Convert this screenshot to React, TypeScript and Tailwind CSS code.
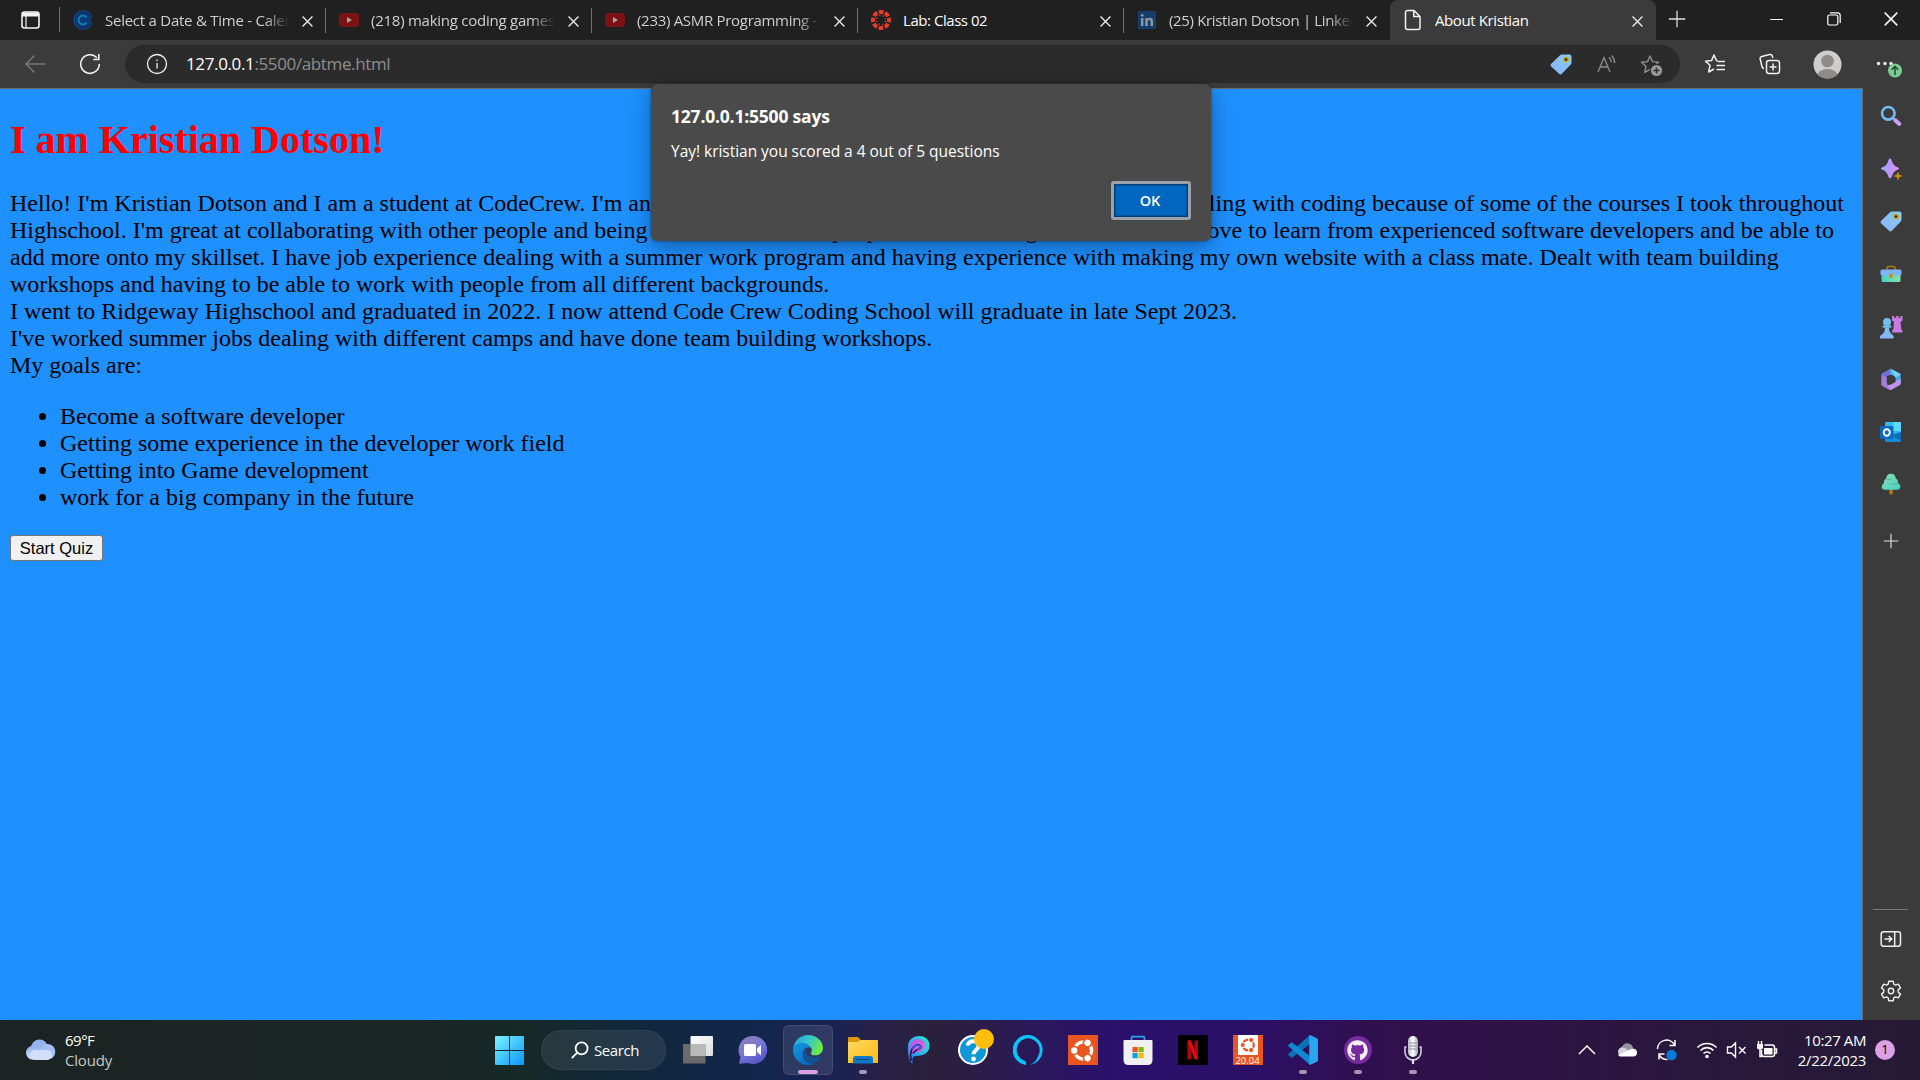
import type { ReactNode } from "react";
import { FaGithub } from "react-icons/fa";

const UI = "font-['Open_Sans','Noto_Sans',sans-serif]";

/* ---------- favicons ---------- */
const Calendly = () => (
  <svg width="20" height="20" viewBox="0 0 20 20" fill="none">
    <circle cx="10" cy="10" r="7.8" fill="#0d3a7c" />
    <path d="M17.5 4.2A9.2 9.2 0 1 0 17.5 15.8" stroke="#0a4a9c" strokeWidth="1.3" />
    <path d="M13.6 7.4A4.4 4.4 0 1 0 13.6 12.6" stroke="#1089a8" strokeWidth="1.7" />
    <path d="M17.5 4.5l1 4M17.5 15.5l1-4" stroke="#0a4a9c" strokeWidth="1.3" />
  </svg>
);
const YouTube = () => (
  <svg width="20" height="20" viewBox="0 0 20 20">
    <rect y="3" width="20" height="14" rx="3.5" fill="#7c1214" />
    <path d="M8 7l5 3-5 3z" fill="#aaa09e" />
  </svg>
);
const Canvas = () => (
  <svg width="20" height="20" viewBox="0 0 20 20" fill="none">
    <circle cx="10" cy="10" r="8" stroke="#e73c2d" strokeWidth="4" strokeDasharray="4.6 1.683" strokeDashoffset="2.3" />
    <circle cx="10" cy="10" r="4.6" stroke="#e73c2d" strokeWidth="1.4" strokeDasharray="1.2 2.413" strokeDashoffset="-1.2" />
  </svg>
);
const LinkedIn = () => (
  <svg width="18" height="18" viewBox="0 0 18 18">
    <rect width="18" height="18" rx="1" fill="#153e6b" />
    <g fill="#8d979f">
      <rect x="3" y="7" width="2.4" height="8" />
      <circle cx="4.2" cy="4.3" r="1.4" />
      <path d="M7.2 7h2.3v1.1C10.1 7.200 11 6.800 12 6.800c2.300 0 3 1.500 3 3.500V15h-2.400v-4.200c0-1.100-.3-1.900-1.300-1.900s-1.600.7-1.600 1.900V15H7.200z" />
    </g>
  </svg>
);
const Page = () => (
  <svg width="18" height="22" viewBox="0 0 18 22" fill="none" stroke="#f2f2f2" strokeWidth="1.5">
    <path d="M3.500 1.500H10l6 6V18.500a2 2 0 0 1-2 2H3.500a2 2 0 0 1-2-2v-15a2 2 0 0 1 2-2z" />
    <path d="M9.800 1.800V7.500h6" />
  </svg>
);
const Close = ({ s = 11 }: { s?: number }) => (
  <svg width={s} height={s} viewBox="0 0 12 12" stroke="#f0f0f0" strokeWidth="1.4">
    <path d="M.6.6l10.800 10.800M11.400.6L.6 11.400" />
  </svg>
);

/* ---------- tabs ---------- */
type TabProps = { icon: ReactNode; title: string; active?: boolean; bright?: boolean; sep?: boolean; fit?: string };
function Tab({ icon, title, active, bright, sep = true, fit = "tracking-[-0.3px]" }: TabProps) {
  return (
    <div className={`relative flex h-10 w-[266px] shrink-0 items-center pl-[13px] ${active ? "rounded-t-lg bg-[#3b3b3b]" : ""}`}>
      <div className="flex w-5 justify-center">{icon}</div>
      <div
        className={`ml-3 w-[186px] overflow-hidden whitespace-nowrap text-[15px] leading-[38px] ${fit} ${active || bright ? "text-white" : "text-[#cfcfcf] [mask-image:linear-gradient(90deg,#000_86%,transparent_99%)]"}`}
      >
        {title}
      </div>
      <div className="mt-0.5 ml-[8px] flex w-4 justify-center"><Close /></div>
      {sep && <div className="absolute top-2 right-0 h-[25px] w-px bg-[#707070]" />}
    </div>
  );
}

/* ---------- toolbar icons ---------- */
const TagIcon = ({ s = 22 }: { s?: number }) => (
  <svg width={s} height={s} viewBox="0 0 22 22">
    <defs>
      <linearGradient id="tag" x1="1" y1="0" x2="0" y2="1">
        <stop stopColor="#84cdf0" /><stop offset="1" stopColor="#8cb2ff" />
      </linearGradient>
    </defs>
    <path d="M12 1.500h7.500A2 2 0 0 1 21.500 3.500V9.500a3 3 0 0 1-1 2.200l-8.600 9a2 2 0 0 1-2.800 0L1.200 13.500a2 2 0 0 1 0-2.800l8.600-8.200A3 3 0 0 1 12 1.500z" fill="url(#tag)" />
    <circle cx="16" cy="6.600" r="2.200" fill="#26303c" stroke="#dba400" strokeWidth="1.500" />
  </svg>
);
const ReadAloud = () => (
  <svg width="22" height="22" viewBox="0 0 22 22" fill="none" stroke="#8a8a8a" strokeWidth="1.400">
    <path d="M2 19L8 4.500 14 19M4.200 14h7.600" />
    <path d="M13 4.200q2.200 2 2.300 5M15.600 2.600q3 3 3 7.400" />
  </svg>
);
const STAR = "M10 2l2.500 5.600 6 .6-4.500 4.100 1.300 6L10 15.300 4.700 18.300 6 12.300 1.500 8.200l6-.6z";
const StarPlus = () => (
  <svg width="24" height="24" viewBox="0 0 24 24" fill="none">
    <path d={STAR} stroke="#8f8f8f" strokeWidth="1.400" strokeLinejoin="round" />
    <circle cx="16.500" cy="16.500" r="6.800" fill="#2b2b2b" />
    <circle cx="16.500" cy="16.500" r="5.600" fill="#9a9a9a" />
    <path d="M16.500 13.500v6M13.500 16.500h6" stroke="#2b2b2b" strokeWidth="1.400" />
  </svg>
);
const Favorites = () => (
  <svg width="22" height="22" viewBox="0 0 22 22" fill="none" stroke="#f0f0f0" strokeWidth="1.500" strokeLinejoin="round">
    <path d="M13.500 7.700L12.500 7.600 10 2 7.500 7.600 1.500 8.200 6 12.300 4.700 19l5.300-3" />
    <path d="M13.500 8.500h7.500M12.500 12.500h8.500M12.500 16.500h8.500" />
  </svg>
);
const Collections = () => (
  <svg width="22" height="22" viewBox="0 0 22 22" fill="none" stroke="#f0f0f0" strokeWidth="1.500">
    <rect x="7.500" y="7.500" width="13" height="13" rx="2.500" />
    <path d="M14 10.500v7M10.500 14h7" />
    <path d="M5 15.500Q3.500 15.500 3 13.500L1.200 6Q.8 4 2.800 3.500L10.500 1.500Q12.800 1 13.300 3L13.800 5" />
  </svg>
);

/* ---------- sidebar icons ---------- */
const SideSearch = () => (
  <svg width="22" height="22" viewBox="0 0 22 22" fill="none">
    <path d="M13 13l3 3" stroke="#a6a6d8" strokeWidth="2" />
    <circle cx="8.300" cy="8.300" r="6.300" stroke="#77baf5" strokeWidth="2.600" />
    <path d="M15.500 15.500l3.600 3.300" stroke="#c8a3f2" strokeWidth="4.200" strokeLinecap="round" />
  </svg>
);
const SideSparkle = () => (
  <svg width="24" height="24" viewBox="0 0 24 24">
    <defs>
      <linearGradient id="spk" x1="0" y1=".5" x2="1" y2=".5"><stop stopColor="#8fb4ff" /><stop offset=".45" stopColor="#b895ff" /><stop offset="1" stopColor="#e394f4" /></linearGradient>
    </defs>
    <path d="M11 1.500Q12 1 12.600 3 14 9 19 10.500 21 11.500 19 12.500 14 14 12.600 20 11 22.500 9.500 20 8 14 3 12.500.8 11.500 3 10.500 8 9 9.500 3 10 1.500 11 1.500z" fill="url(#spk)" />
    <path d="M19 14.500l1.300 3.300 3.500 1.200-3.500 1.300L19 23.700l-1.300-3.400-3.500-1.300 3.500-1.200z" fill="#c98a10" />
  </svg>
);
const SideToolbox = () => (
  <svg width="22" height="18" viewBox="0 0 22 18">
    <defs><linearGradient id="tb"><stop stopColor="#43d3c5" /><stop offset="1" stopColor="#8ae0a5" /></linearGradient></defs>
    <path d="M7 5V3a1.500 1.500 0 0 1 1.500-1.500h5A1.500 1.500 0 0 1 15 3v2" fill="none" stroke="#a97813" strokeWidth="1.600" />
    <rect x="1.500" y="9" width="19" height="8" rx="1.500" fill="url(#tb)" />
    <rect x=".5" y="4.500" width="21" height="6" rx="1.500" fill="#7cb6f5" />
    <rect x="9.300" y="8.500" width="3.400" height="4.400" rx="1.200" fill="#c98f18" />
  </svg>
);
const SideGames = () => (
  <svg width="24" height="24" viewBox="0 0 24 24">
    <defs><linearGradient id="pawn" x2="0" y2="1"><stop stopColor="#6fc3ee" /><stop offset="1" stopColor="#8eb3fb" /></linearGradient></defs>
    <path d="M13 1h2.200v1.800h2V1h2.300v1.800h2V1H23.500v4.500L21.500 7l.8 7 1.200 2v1.500H13V16l1.400-2 .6-7-2-1.500z" fill="#c77be0" />
    <circle cx="8" cy="7" r="4" fill="#6fc0ef" />
    <rect x="3.500" y="10.500" width="9" height="2.300" rx="1.100" fill="#78bcf2" />
    <path d="M6 12.500h4q0 5 3 7 1.800 1 1.800 2.700 0 1.300-1.200 1.300H2Q.8 23.500.8 22.200.8 20.500 3 19.500 6 17.500 6 12.500z" fill="url(#pawn)" />
  </svg>
);
const SideOffice = () => (
  <svg width="22" height="23" viewBox="0 0 22 23">
    <path d="M10.500.8L1.500 5.500V17l4.500 2.700V8.500l8-3z" fill="#6d6ed8" />
    <path d="M10.500.8L19.500 5a2 2 0 0 1 1.200 1.800V16L15.500 14V9L9.500 6z" fill="#47abe9" />
    <path d="M20.700 11v5.500l-9 5.200q-1 .6-2 0L2 17.500 9.500 17l6-3.500z" fill="#c193e8" />
    <path d="M1.500 7v10.500l8.500 4.700-3-6.700V9z" fill="#a27bdc" />
    <path d="M10.500.8l5 8.700 5.200-3z" fill="#77d3f4" />
    <path d="M11 6.800l4.300 2.500v4.600L11 16.400l-4.200-2.500V9.300z" fill="#3b3b3b" />
  </svg>
);
const SideOutlook = () => (
  <svg width="22" height="22" viewBox="0 0 22 22">
    <rect x="5" y="1" width="16" height="17" rx="1" fill="#35b8f1" />
    <path d="M13 1h7q1 0 1 1v8h-8z" fill="#5ad7fa" />
    <path d="M5 14l16-3v9a1 1 0 0 1-1 1H6a1 1 0 0 1-1-1z" fill="#1a8ad8" />
    <path d="M21 11v9l-8-5z" fill="#126bb5" />
    <rect x="0" y="5" width="13.500" height="13" rx="1.300" fill="#0b6bc1" />
    <ellipse cx="6.800" cy="11.500" rx="3" ry="3.300" fill="none" stroke="#fff" strokeWidth="1.900" />
  </svg>
);
const SideTree = () => (
  <svg width="20" height="22" viewBox="0 0 20 22">
    <defs><linearGradient id="tree" x2="1" y2="1"><stop stopColor="#8eddb4" /><stop offset="1" stopColor="#42cfc2" /></linearGradient></defs>
    <rect x="8.500" y="15" width="3.200" height="6.500" rx=".8" fill="#b9791a" />
    <path d="M10 .8Q14.500 1 14.800 5.500 17.500 7 17 10 20 12 19.300 14.500 18.500 17 15.500 16.800H4.500Q1 17 .7 14.300.5 12 3 10 2.500 7 5.200 5.500 5.500 1 10 .8z" fill="url(#tree)" />
    <path d="M5.500 6q3 1.500 5 0M10 11q4 1.500 7-1" stroke="#35b59f" strokeWidth=".9" fill="none" />
  </svg>
);
const PlusIcon = ({ s = 18 }: { s?: number }) => (
  <svg width={s} height={s} viewBox="0 0 18 18" stroke="#dedede" strokeWidth="1.300"><path d="M9 .8v16.400M.8 9h16.400" /></svg>
);
const PanelIcon = () => (
  <svg width="22" height="18" viewBox="0 0 22 18" fill="none" stroke="#eee" strokeWidth="1.500">
    <rect x="1.200" y="1.700" width="19.300" height="14.600" rx="2.500" />
    <path d="M14.700 2v14M4.500 9h7M8.700 6l3 3-3 3" />
  </svg>
);
const Gear = () => (
  <svg width="22" height="22" viewBox="0 0 22 22" fill="none" stroke="#eee" strokeWidth="1.400" strokeLinejoin="round">
    <path d="M8.800 1.200h4.400l.6 3 1.600.9 2.900-1 2.200 3.800-2.300 2v2.200l2.300 2-2.200 3.800-2.900-1-1.600.9-.6 3H8.800l-.6-3-1.600-.9-2.900 1-2.200-3.800 2.300-2V9.900l-2.300-2 2.200-3.800 2.900 1 1.600-.9z" />
    <circle cx="11" cy="11" r="2.700" />
  </svg>
);

/* ---------- taskbar icons ---------- */
const StartLogo = () => (
  <svg width="29" height="29" viewBox="0 0 29 29">
    <defs><linearGradient id="win" x2="1" y2="1"><stop stopColor="#7cf3ff" /><stop offset="1" stopColor="#0a96ff" /></linearGradient></defs>
    <path d="M1 0h13v14H0V1a1 1 0 0 1 1-1zM15 0h13a1 1 0 0 1 1 1v13H15zM0 15h14v14H1a1 1 0 0 1-1-1zM15 15h14v13a1 1 0 0 1-1 1H15z" fill="url(#win)" />
  </svg>
);
const TaskView = () => (
  <svg width="30" height="30" viewBox="0 0 30 30">
    <defs><linearGradient id="tv" x2="1" y2="1"><stop stopColor="#fff" /><stop offset="1" stopColor="#dcdcdc" /></linearGradient></defs>
    <rect x="7.500" y="1" width="22.500" height="20" rx="1" fill="url(#tv)" />
    <rect x="0" y="9" width="22.500" height="19.500" rx="1" fill="#6a6a6a" />
    <rect x="7.500" y="9" width="15" height="12" fill="#b9b9b9" />
  </svg>
);
const Chat = () => (
  <svg width="30" height="30" viewBox="0 0 30 30">
    <defs><linearGradient id="chat" x2=".6" y2="1"><stop stopColor="#967bb5" /><stop offset=".55" stopColor="#7479d6" /><stop offset="1" stopColor="#5a54c8" /></linearGradient></defs>
    <path d="M15 1a14 14 0 1 1-5 27L1 28.700 2.500 22A14 14 0 0 1 15 1z" fill="url(#chat)" />
    <rect x="6" y="9" width="12" height="12" rx="1.500" fill="#fff" />
    <path d="M19 13.500l4-3.500v10.500l-4-3.500z" fill="#fff" />
  </svg>
);
const Edge = () => (
  <svg width="30" height="30" viewBox="0 0 30 30">
    <defs>
      <linearGradient id="eg" x2="1" y2=".4"><stop stopColor="#249fdf" /><stop offset=".55" stopColor="#36c6c8" /><stop offset="1" stopColor="#6be94a" /></linearGradient>
      <linearGradient id="eb" x2=".6" y2="1"><stop stopColor="#1799d8" /><stop offset="1" stopColor="#0a68c9" /></linearGradient>
    </defs>
    <path d="M.2 13.500C1.500 5 7.500 0 15 0c8.500 0 15 6 15 13 0 4.500-3.500 7.300-7.500 7.300-3.300 0-5.500-1.200-4.500-2.600 2-2.700.5-6.200-3-7.200C8.500 7.500 2 10 .2 13.500z" fill="url(#eg)" />
    <path d="M0 15C0 9.500 6 6.800 11 8c3.500.8 6 2.800 7 5.500-2-1.800-6-1.500-7.500 2C8 21 12 28.500 20 29c-1.500.7-3.300 1-5 1C6.700 30 0 23.300 0 15z" fill="url(#eb)" />
    <path d="M12.500 13C8 17.500 11 28 20 28.800c3-1 6.500-3.600 8-6.700.4-.8-.3-1.200-1-.8C20 25 11.500 21 12.500 13z" fill="#115293" />
  </svg>
);
const Explorer = () => (
  <svg width="30" height="30" viewBox="0 0 30 30">
    <defs><linearGradient id="fo" x2="1" y2="1"><stop stopColor="#ffda61" /><stop offset="1" stopColor="#fdb913" /></linearGradient></defs>
    <path d="M0 3a1 1 0 0 1 1-1h9l3 3h16v4H0z" fill="#d99a05" />
    <path d="M0 7h9.500l3-2H29a1 1 0 0 1 1 1v22H0z" fill="url(#fo)" />
    <path d="M5 28.500v-5q0-2.500 2.500-2.500h15q2.500 0 2.500 2.500v5z" fill="#1079ca" />
    <path d="M8.500 24.500h13" stroke="#0a477c" strokeWidth="1.200" />
  </svg>
);
const PApp = () => (
  <svg width="30" height="30" viewBox="0 0 30 30" fill="none">
    <defs>
      <linearGradient id="pa" x1="0" y1="1" x2="1" y2="0"><stop stopColor="#1c75e8" /><stop offset=".5" stopColor="#28b9ee" /><stop offset="1" stopColor="#1ff2c0" /></linearGradient>
      <linearGradient id="pb" x2="1" y2="1"><stop stopColor="#a45df1" /><stop offset="1" stopColor="#f06bd0" /></linearGradient>
    </defs>
    <path d="M5 10C6 4 11 1 16.500 1c6.500 0 10 4.500 10 9.500 0 6.500-5 10.500-14 10.500-3 0-3.500 3-3 8-4-3-5-12-4.500-19z" fill="url(#pa)" />
    <path d="M6.500 10.500C8.500 5 12.500 3.500 16 4c5 .6 7 4 6 8-1 3.500-5 5.500-9 5.500-3 0-4.500 2-5 5-1.500-3-2.500-7-1.500-12z" fill="url(#pb)" />
    <path d="M8.200 26C6.500 18 8.500 11.500 14 10c4-.6 5 2.600 2 4-2.500 1-5 1.800-6 4.500" stroke="#241f66" strokeWidth="1.800" />
    <path d="M9.500 14c2-3 5-4.500 7.500-3.200 1.500 1.500 0 3.200-2.500 3.700" stroke="#2c6cf0" strokeWidth="1.200" />
  </svg>
);
const Help = () => (
  <svg width="36" height="36" viewBox="0 0 36 36" className="-mt-1.5 ml-1.5">
    <circle cx="15" cy="21" r="14" fill="#0e97d6" stroke="#fff" strokeWidth="2" />
    <path d="M10 16.500C10 10.500 20.500 11 20.500 17c0 4-5 4-5 8.200" fill="none" stroke="#fff" strokeWidth="4" />
    <circle cx="15.500" cy="30" r="2.400" fill="#fff" />
    <circle cx="26" cy="10" r="10" fill="#ffbe0b" />
  </svg>
);
const Alexa = () => (
  <svg width="30" height="30" viewBox="0 0 30 30">
    <path fillRule="evenodd" fill="#05c5fb" d="M15 0a15 15 0 0 1 2 29.800Q23.500 27.500 25.500 20A11.500 11.500 0 1 0 11.500 25.800q1.500.5 1.500 2V29.900A15 15 0 0 1 15 0z" />
  </svg>
);
const UbuntuMark = ({ s = 22, c = "#fff", bg = "#e95420" }: { s?: number; c?: string; bg?: string }) => (
  <svg width={s} height={s} viewBox="0 0 22 22">
    <circle cx="11.500" cy="11" r="7.500" fill="none" stroke={c} strokeWidth="3" />
    {[180, 300, 60].map((a) => (
      <g key={a} transform={`rotate(${a} 11.500 11)`}>
        <circle cx="19.300" cy="11" r="4.200" fill={bg} />
        <circle cx="19.300" cy="11" r="2.800" fill={c} />
      </g>
    ))}
  </svg>
);
const Ubuntu = () => <div className="flex size-[30px] items-center justify-center bg-[#e95420]"><UbuntuMark s={25} /></div>;
const Ubuntu2004 = () => (
  <div className="flex size-[30px] flex-col items-center overflow-hidden bg-[#e95420]">
    <div className="flex h-5 w-5 shrink-0 items-center justify-center bg-white"><UbuntuMark s={16} c="#e95420" bg="#fff" /></div>
    <span className="font-['Open_Sans',sans-serif] text-[9.500px] leading-[12px] text-white">20.04</span>
  </div>
);
const Store = () => (
  <svg width="30" height="30" viewBox="0 0 30 30">
    <path d="M8.500 7V3q0-1.300 1.300-1.300h10.400q1.300 0 1.300 1.300v4" fill="none" stroke="#27a5ea" strokeWidth="1.800" />
    <path d="M.5 6q0-1 1-1h27q1 0 1 1v19q0 5-5 5h-19q-5 0-5-5z" fill="#f0f0f0" />
    <rect x="9.500" y="12" width="5.200" height="5.200" fill="#f25022" /><rect x="15.500" y="12" width="5.200" height="5.200" fill="#7fba00" />
    <rect x="9.500" y="18" width="5.200" height="5.200" fill="#00a4ef" /><rect x="15.500" y="18" width="5.200" height="5.200" fill="#ffb900" />
  </svg>
);
const Netflix = () => (
  <svg width="30" height="30" viewBox="0 0 30 30">
    <rect width="30" height="30" fill="#000" />
    <path d="M9.500 5.500h3.500v18.500l-3.500.6zM16.500 5.500H20v19l-3.500-.5z" fill="#b1060f" />
    <path d="M9.500 5.500H13l7 19-3.500-.4z" fill="#e50914" />
  </svg>
);
const VSCode = () => (
  <svg width="30" height="30" viewBox="0 0 30 30">
    <path d="M22 0v9L4.500 22.300q-.8.600-1.600 0L.5 20.300q-.9-.8 0-1.600z" fill="#0b72b9" />
    <path d="M22 30v-9L4.500 7.700q-.8-.6-1.600 0L.5 9.700q-.9.800 0 1.600z" fill="#1088d1" />
    <path d="M22 0l7 3.200q1 .5 1 1.700v20.200q0 1.200-1 1.700L22 30q-.8 0-.8-1.200V1.200Q21.200 0 22 0z" fill="#2ba4ee" />
  </svg>
);
const GitHub = () => (
  <div className="flex size-7 items-center justify-center rounded-full bg-[#762a9d]"><FaGithub size={21} color="#f1eef5" /></div>
);
const Mic = () => (
  <svg width="30" height="30" viewBox="0 0 30 30" fill="none">
    <defs><linearGradient id="mic"><stop stopColor="#b9bcc4" /><stop offset=".5" stopColor="#fff" /><stop offset="1" stopColor="#9fa3ad" /></linearGradient></defs>
    <path d="M8.500 12H7v5a8 8 0 0 0 16 0v-5h-1.500" stroke="#cfd0d6" strokeWidth="1.600" />
    <rect x="10" y="1" width="10" height="21" rx="5" fill="url(#mic)" />
    <path d="M11 8h8M11 11h8M11 14h8" stroke="#8c8f99" strokeWidth="1" />
    <path d="M15 24v5" stroke="#e4e4ea" strokeWidth="2.200" />
  </svg>
);

function TaskItem({ children, dot, active }: { children: ReactNode; dot?: boolean; active?: boolean }) {
  return (
    <div className="flex h-[60px] w-[55px] shrink-0 items-center justify-center">
      <div className={`relative flex size-[50px] items-center justify-center rounded-md ${active ? "border border-white/10 bg-white/10" : ""}`}>
        {children}
        {dot && <div className="absolute bottom-[1px] h-1 w-2 rounded-full bg-[#a497b1]" />}
        {active && <div className="absolute bottom-0 h-1 w-5 rounded-full bg-[#dd9fe2]" />}
      </div>
    </div>
  );
}

const goals = [
  "Become a software developer",
  "Getting some experience in the developer work field",
  "Getting into Game development",
  "work for a big company in the future",
];

export default function App() {
  return (
    <div className={`flex h-[1080px] w-[1920px] flex-col overflow-hidden bg-[#3b3b3b] ${UI}`}>
      {/* tab strip */}
      <div className="flex h-10 shrink-0 items-center bg-[#202020]">
        <div className="flex h-10 w-[59px] items-center pl-[21px]">
          <svg width="19" height="18" viewBox="0 0 19 18" fill="none" stroke="#f3f3f3" strokeWidth="1.600">
            <rect x="1" y="1" width="17" height="16" rx="2.500" />
            <path d="M1 3.500h17" strokeWidth="4" /><path d="M5 4v13" strokeWidth="1.200" />
          </svg>
        </div>
        <div className="-mt-0.5 h-[25px] w-px bg-[#707070]" />
        <Tab icon={<Calendly />} title="Select a Date & Time - Calendly" fit="tracking-[-0.25px]" />
        <Tab icon={<YouTube />} title="(218) making coding games" fit="tracking-[-0.25px]" />
        <Tab icon={<YouTube />} title="(233) ASMR Programming - No" />
        <Tab icon={<Canvas />} title="Lab: Class 02" bright fit="tracking-[-0.45px]" />
        <Tab icon={<LinkedIn />} title="(25) Kristian Dotson | LinkedIn" sep={false} fit="tracking-[-0.35px]" />
        <Tab icon={<Page />} title="About Kristian" active sep={false} fit="tracking-[-0.4px]" />
        <div className="-mt-0.5 ml-[10px] flex w-[22px] justify-center"><PlusIcon /></div>
        <div className="-mt-0.5 ml-auto flex items-center pr-[22px]">
          <div className="h-px w-[13px] bg-white" />
          <svg className="ml-[44px]" width="14" height="14" viewBox="0 0 14 14" fill="none" stroke="#fff" strokeWidth="1.200">
            <rect x=".8" y="3" width="10" height="10" rx="1.500" /><path d="M3 .8h7.500a2.700 2.700 0 0 1 2.700 2.700V11" />
          </svg>
          <div className="ml-[43px]"><Close s={14} /></div>
        </div>
      </div>

      {/* toolbar */}
      <div className="flex h-12 shrink-0 items-center">
        <svg className="ml-6" width="22" height="20" viewBox="0 0 22 20" fill="none" stroke="#777" strokeWidth="1.500">
          <path d="M21 10H2M10.500 1.500L1.800 10l8.700 8.500" />
        </svg>
        <svg className="ml-[33px]" width="22" height="22" viewBox="0 0 22 22" fill="none" stroke="#eee" strokeWidth="1.600">
          <path d="M20.300 11a9.300 9.300 0 1 1-2.400-6.200M19.800 1v5.500h-5.500" />
        </svg>
        <div className="ml-6 flex h-[38px] w-[1555px] items-center rounded-full bg-[#2b2b2b] pl-[21px]">
          <svg width="22" height="22" viewBox="0 0 22 22" fill="none" stroke="#f0f0f0" strokeWidth="1.300">
            <circle cx="11" cy="11" r="9.500" /><path d="M11 10v5.500M11 6.500v1.600" />
          </svg>
          <div className="ml-[18px] text-[17px] tracking-[-0.37px] whitespace-nowrap text-[#8f8f8f]"><span className="text-white">127.0.0.1</span>:5500/abtme.html</div>
          <div className="ml-auto flex items-center pr-[16px]">
            <TagIcon /><div className="ml-[24px]"><ReadAloud /></div><div className="ml-[22px] mt-1"><StarPlus /></div>
          </div>
        </div>
        <div className="ml-6"><Favorites /></div>
        <div className="ml-[33px]"><Collections /></div>
        <svg className="ml-[32px]" width="29" height="29" viewBox="0 0 29 29">
          <clipPath id="av"><circle cx="14.500" cy="14.500" r="14" /></clipPath>
          <g clipPath="url(#av)"><rect width="29" height="29" fill="#cfcdcb" /><circle cx="14.500" cy="11" r="6.300" fill="#8f8b88" /><ellipse cx="14.500" cy="26.500" rx="10.500" ry="7.500" fill="#8f8b88" /></g>
        </svg>
        <svg className="ml-[33px]" width="28" height="28" viewBox="0 0 28 28">
          <g fill="#eee"><circle cx="3.500" cy="13.500" r="1.700" /><circle cx="10" cy="13.500" r="1.700" /><circle cx="16" cy="13.500" r="1.700" /></g>
          <circle cx="20" cy="20.500" r="7" fill="#7bcb92" />
          <path d="M20 25v-8M16.700 19.700l3.300-3.200 3.300 3.200" stroke="#26402d" strokeWidth="1.400" fill="none" />
        </svg>
      </div>

      {/* page and sidebar */}
      <div className="flex h-[932px] shrink-0">
        <div className="relative w-[1863px] border-t border-r border-[#6b6b6b] bg-[#1e90ff] font-['Liberation_Serif',serif] text-[24px] leading-[27px] text-black">
          <div className="px-[10px]">
            <h1 className="pt-[27px] text-[40px] leading-[48px] font-bold whitespace-nowrap text-[#ff0000]">I am Kristian Dotson!</h1>
            <div className="mt-[26px] whitespace-nowrap">
              <div className="flex w-[1834px] justify-between">
                <span>Hello! I'm Kristian Dotson and I am a student at CodeCrew. I'm an</span>
                <span>aspiring software developer. I started dealing with coding because of some of the courses I took throughout</span>
              </div>
              <div className="flex w-[1824px] justify-between">
                <span>Highschool. I'm great at collaborating with other people and being able to work with <span className="ml-1">people</span> <span className="ml-4">and learning</span></span>
                <span>I love to learn from experienced software developers and be able to</span>
              </div>
              <div>add more onto my skillset. I have job experience dealing with a summer work program and having experience with making my own website with a class mate. Dealt with team building</div>
              <div>workshops and having to be able to work with people from all different backgrounds.</div>
              <div>I went to Ridgeway Highschool and graduated in 2022. I now attend Code Crew Coding School will graduate in late Sept 2023.</div>
              <div>I've worked summer jobs dealing with different camps and have done team building workshops.</div>
              <div>My goals are:</div>
            </div>
            <ul className="mt-6 list-disc pl-[50px]">
              {goals.map((g) => <li key={g}>{g}</li>)}
            </ul>
            <button className="mt-[24px] block h-[26px] w-[93px] rounded-[3px] border border-[#767676] bg-[#f0f0f0] font-['Liberation_Sans',sans-serif] text-[16.500px] leading-[22px] whitespace-nowrap">Start Quiz</button>
          </div>

          {/* alert dialog */}
          <div className={`absolute -top-[5px] left-[651px] z-10 h-[157px] w-[560px] rounded-md bg-[#4a4a4a] px-5 text-white shadow-[0_6px_22px_rgba(0,0,0,0.35),0_0_3px_rgba(0,0,0,0.4)] ${UI}`}>
            <div className="pt-5 text-[17.500px] leading-6 font-bold tracking-[-0.2px]">127.0.0.1:5500 says</div>
            <div className="mt-[11px] text-[15.500px] leading-6 tracking-[-0.03px]">Yay! kristian you scored a 4 out of 5 questions</div>
            <div className="mt-[18px] flex justify-end">
              <div className="flex h-[39px] w-20 items-center justify-center rounded-[3px] border-[3px] border-[#9aa3ab] bg-[#0067c0] pr-0.5 text-[14.500px] font-semibold shadow-[inset_0_0_0_1.500px_#003f75]">OK</div>
            </div>
          </div>
        </div>

        <div className="flex flex-1 flex-col items-center pr-[2px]">
          {[SideSearch, SideSparkle, TagIcon, SideToolbox, SideGames, SideOffice, SideOutlook, SideTree].map((Icon, i) => (
            <div key={i} className="flex h-[52.600px] w-full shrink-0 items-center justify-center first:mt-[2px]"><Icon /></div>
          ))}
          <div className="mt-[22px]"><PlusIcon s={16} /></div>
          <div className="mt-auto h-px w-[35px] bg-[#777]" />
          <div className="mt-[20px]"><PanelIcon /></div>
          <div className="mt-[32px] mb-[18px]"><Gear /></div>
        </div>
      </div>

      {/* taskbar */}
      <div className="flex h-[60px] shrink-0 items-center bg-[linear-gradient(90deg,#1c2423_0%,#1a2524_22%,#152926_27%,#11283a_32%,#12264a_39%,#192354_43%,#282046_46%,#2a203c_49%,#2a185b_54%,#2b106c_58%,#2b1067_65%,#300f4f_71%,#2e1244_79%,#29173c_88%,#251a35_100%)]">
        <div className="flex w-[482px] items-center pl-[25px]">
          <svg width="31" height="22" viewBox="0 0 31 22">
            <defs><linearGradient id="cl" x2="0" y2="1"><stop stopColor="#8cb0f0" /><stop offset="1" stopColor="#d9e3fa" /></linearGradient></defs>
            <circle cx="14.500" cy="9" r="8.500" fill="#94b4f0" /><circle cx="22.500" cy="12.800" r="7.800" fill="#a5bff2" /><circle cx="8" cy="13.800" r="7" fill="url(#cl)" /><rect x="5" y="11" width="22" height="10" rx="5" fill="#d2defa" />
          </svg>
          <div className="ml-[9px] text-[15px] leading-5 tracking-[-0.2px] text-[#c5c9c8]"><div className="tracking-[-0.5px] text-white">69°F</div><div>Cloudy</div></div>
        </div>
        <TaskItem><StartLogo /></TaskItem>
        <div className="ml-[4px] flex h-10 w-[125px] shrink-0 items-center rounded-full border border-white/5 bg-white/8 pl-[29px]">
          <svg width="18" height="18" viewBox="0 0 18 18" fill="none" stroke="#fff" strokeWidth="1.800"><circle cx="10.600" cy="7.300" r="6" /><path d="M6.200 11.700L.8 17.200" /></svg>
          <span className="ml-[5px] text-[15px] tracking-[-0.4px] text-white">Search</span>
        </div>
        <div className="ml-[4px] flex">
          <TaskItem><TaskView /></TaskItem>
          <TaskItem><Chat /></TaskItem>
          <TaskItem active><Edge /></TaskItem>
          <TaskItem dot><Explorer /></TaskItem>
          <TaskItem><PApp /></TaskItem>
          <TaskItem><Help /></TaskItem>
          <TaskItem><Alexa /></TaskItem>
          <TaskItem><Ubuntu /></TaskItem>
          <TaskItem><Store /></TaskItem>
          <TaskItem><Netflix /></TaskItem>
          <TaskItem><Ubuntu2004 /></TaskItem>
          <TaskItem dot><VSCode /></TaskItem>
          <TaskItem dot><GitHub /></TaskItem>
          <TaskItem dot><Mic /></TaskItem>
        </div>
        <div className="ml-auto flex items-center pr-[25px]">
          <svg width="18" height="10" viewBox="0 0 18 10" fill="none" stroke="#fff" strokeWidth="1.500"><path d="M1 9l8-8 8 8" /></svg>
          <svg className="ml-5" width="22" height="16" viewBox="0 0 22 16">
            <path d="M5 6Q8 0 13 1.500 16.500 2.500 17 6L11 10 4 7z" fill="#98909f" />
            <path d="M6 5.500q3 0 5 2l4 1.500-9 5H5.500a4.300 4.300 0 0 1 .5-8.500z" fill="#d6d2da" />
            <path d="M17 6.500q4 .5 4 4.300 0 3.700-4 3.700H5q-2 0-3-1.500L14 7.500q1.500-1 3-1z" fill="#fff" />
          </svg>
          <svg className="ml-[17px]" width="24" height="24" viewBox="0 0 24 24" fill="none" stroke="#fff" strokeWidth="1.500">
            <path d="M2.500 11A9 9 0 0 1 19.500 7M20 2v5.500h-5.500M4 21.500V16h5.500M4.500 17.500a9 9 0 0 0 8 4" /><circle cx="16.500" cy="17" r="5.200" fill="#0a7ad8" stroke="none" />
          </svg>
          <svg className="ml-[17px]" width="22" height="18" viewBox="0 0 22 18" fill="none" stroke="#fff" strokeWidth="1.700">
            <path d="M1.500 6.500a13.300 13.300 0 0 1 19 0M4.500 9.500a9 9 0 0 1 13 0M7.500 12.500a5 5 0 0 1 7 0" /><circle cx="11" cy="15.500" r="1.800" fill="#fff" stroke="none" />
          </svg>
          <svg className="ml-[8px]" width="22" height="18" viewBox="0 0 22 18" fill="none" stroke="#fff" strokeWidth="1.400">
            <path d="M1.500 6h3.800L9.500 2v14l-4.200-4H1.500zM13 6l6.500 6.500M19.500 6L13 12.500" />
          </svg>
          <svg className="ml-[8px]" width="22" height="18" viewBox="0 0 22 18" fill="none" stroke="#fff" strokeWidth="1.500">
            <path d="M8.500 4H16q2.500 0 2.500 2.500v7q0 2-2.500 2H8q-2.500 0-2.500-2.500V9M19 8h1.500v4H19" />
            <path d="M8 7h8.500v6.500H8z" fill="#fff" stroke="none" /><path d="M1 3h6v3.500q0 2-3 2t-3-2z" fill="#fff" stroke="none" /><path d="M2.500 0v3M5.500 0v3M4 8v7.500h2" />
          </svg>
          <div className="ml-[18px] w-[70px] text-right text-[15px] leading-5 tracking-[-0.3px] whitespace-nowrap text-white"><div className="tracking-[-0.4px]">10:27 AM</div><div>2/22/2023</div></div>
          <div className="ml-[9px] flex size-5 items-center justify-center rounded-full bg-[#dca0e4] text-[13px] text-black">1</div>
        </div>
      </div>
    </div>
  );
}
